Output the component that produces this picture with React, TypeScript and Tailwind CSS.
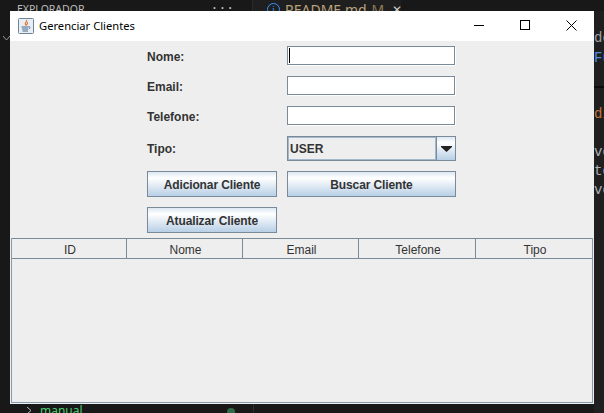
const labelClass = "w-[140px] text-[12px] font-bold text-[#333333]";
const fieldClass = "mb-px h-[19px] w-[168px] border border-[#7a8a99] bg-white shadow-[1px_1px_0_#ffffff]";
const buttonClass =
  "h-[26px] border border-[#7a8a99] bg-gradient-to-b from-[#dde8f3] via-[#ffffff] via-[25%] to-[#b8cfe5] pt-[2px] text-[12px] font-bold tracking-[-0.12px] text-[#333333]";

const columns = ["ID", "Nome", "Email", "Telefone", "Tipo"];

const JavaIcon = () => (
  <svg width="16" height="16" viewBox="0 0 16 16" fill="none">
    <rect x="0.5" y="0.5" width="15" height="15" rx="1" fill="#e8eef5" stroke="#6f8296" />
    <path d="M8.5 2c1 1.7-1.8 2.4-1.1 4.2.2.6.7.9.9 1.3-.1-1.1 2.1-1.8 1.1-3.4" stroke="#e2762c" strokeWidth="1.2" />
    <path d="M3.5 9h7M4 11h6M4.5 13h5.5" stroke="#47698c" strokeWidth="1" />
    <path d="M10.5 8.8c1.9-.4 2.2 1.5.2 2.1" stroke="#47698c" strokeWidth="0.9" />
  </svg>
);

const Background = () => (
  <div className="flex h-full w-full bg-[#181818] text-[#cccccc]">
    <div className="flex h-[40px] w-[253px] shrink-0 justify-between border-r border-[#2b2b2b] pl-[17px] pr-[18px] pt-[2px]">
      <span className="font-['Noto_Sans',sans-serif] text-[10.5px] leading-[14px] text-[#bbbbbb]">EXPLORADOR</span>
      <span className="font-['Liberation_Mono',monospace] text-[13px] leading-[14px]">···</span>
    </div>
    <div className="flex h-[40px] w-[148px] shrink-0 gap-[5px] overflow-hidden bg-[#1f1f1f] pl-[14px] pt-[1px] font-['Noto_Sans',sans-serif] text-[14px] leading-[18px]">
      <span className="mt-[2px] flex h-[13px] w-[13px] shrink-0 items-center justify-center rounded-full border border-[#3794ff] text-[9px] leading-none text-[#3794ff]">i</span>
      <span className="shrink-0 text-[#b9a27c]">README.md</span>
      <span className="shrink-0 text-[#8f7c58]">M</span>
      <span className="ml-[3px] shrink-0 text-[12px] text-[#cccccc]">✕</span>
    </div>
    <div className="flex-1" />
  </div>
);

export default function App() {
  return (
    <div className="relative h-[413px] w-[604px] overflow-hidden font-['Liberation_Sans',Arial,sans-serif]">
      <Background />

      {/* Bits of the editor showing round the window */}
      <svg className="absolute left-[3px] top-[34px]" width="8" height="8" viewBox="0 0 8 8" fill="none">
        <path d="M0 2l3.5 4L7 2" stroke="#999999" strokeWidth="1" />
      </svg>
      <div className="absolute left-[594px] top-[11px] h-[402px] w-[10px] bg-[#1f1f1f]" />
      <div className="absolute left-[594px] top-[28px] font-['Liberation_Mono',monospace] text-[14px] leading-[20px]">
        <div className="text-[#a0a0a0]">de</div>
        <div className="text-[#4d8fe0]">Fu</div>
      </div>
      <div className="absolute left-[594px] top-[86px] h-[2px] w-[10px] bg-[#0c0c0c]" />
      <div className="absolute left-[594px] top-[104px] font-['Liberation_Mono',monospace] text-[14px] leading-[20px] text-[#c2743c]">di</div>
      <div className="absolute left-[594px] top-[143px] font-['Liberation_Mono',monospace] text-[14px] leading-[19px] text-[#b0b0b0]">
        <div>vo</div>
        <div>tê</div>
        <div>vo</div>
      </div>
      <svg className="absolute left-[26px] top-[407px]" width="6" height="6" viewBox="0 0 6 6" fill="none">
        <path d="M1 0l4 3.5L1 7" stroke="#bbbbbb" strokeWidth="1" />
      </svg>
      <div className="absolute left-[40px] top-[405px] font-['Noto_Sans',sans-serif] text-[12px] leading-[12px] text-[#4ec96f]">manual</div>
      <div className="absolute left-[227px] top-[408px] h-2 w-2 rounded-full bg-[#2f6b48]" />
      <div className="absolute left-[253px] top-[404px] h-[9px] w-px bg-[#2b2b2b]" />

      {/* Window */}
      <div className="absolute left-[10px] top-[11px] flex h-[393px] w-[584px] flex-col bg-[#eeeeee]">
        <div className="flex h-[30px] items-center bg-white">
          <div className="mb-px ml-[8px] mr-[5px] flex">
            <JavaIcon />
          </div>
          <span className="font-['Noto_Sans',sans-serif] text-[11.2px] text-black">Gerenciar Clientes</span>
          <div className="ml-auto flex h-full items-center pb-[2px]">
            <div className="flex h-full w-[46px] items-center justify-center">
              <div className="h-px w-[10px] bg-black" />
            </div>
            <div className="flex h-full w-[46px] items-center justify-center">
              <div className="h-[10px] w-[10px] border border-black" />
            </div>
            <div className="flex h-full w-[46px] items-center justify-center">
              <svg width="11" height="11" viewBox="0 0 11 11" fill="none">
                <path d="M0.5 0.5l10 10M10.5 0.5l-10 10" stroke="black" strokeWidth="1" />
              </svg>
            </div>
          </div>
        </div>

        <div className="flex flex-col pl-[137px] pt-[5px]">
          <div className="flex items-center">
            <span className={`${labelClass} pt-[2px]`}>Nome:</span>
            <div className={`${fieldClass} flex items-center pl-px`}>
              <div className="h-[15px] w-px bg-black" />
            </div>
          </div>
          <div className="mt-[10px] flex items-center">
            <span className={`${labelClass} pt-[2px]`}>Email:</span>
            <div className={fieldClass} />
          </div>
          <div className="mt-[10px] flex items-center">
            <span className={`${labelClass} pt-[2px]`}>Telefone:</span>
            <div className={fieldClass} />
          </div>
          <div className="mt-[10px] flex items-center">
            <span className={labelClass}>Tipo:</span>
            <div className="flex h-[25px] w-[169px] border border-[#7a8a99] bg-[#eeeeee]">
              <div className="flex flex-1 items-center border border-[#a3b8cc] pl-px text-[12px] font-bold text-[#333333]">USER</div>
              <div className="flex w-[19px] items-center justify-center border-l border-[#7a8a99] bg-gradient-to-b from-[#dde8f3] via-[#ffffff] via-[25%] to-[#b8cfe5]">
                <svg width="11" height="6" viewBox="0 0 11 6">
                  <path d="M0 0h11v1L5.5 6 0 1z" fill="#222222" />
                </svg>
              </div>
            </div>
          </div>
          <div className="mt-[10px] flex gap-[10px]">
            <button className={`${buttonClass} w-[130px]`}>Adicionar Cliente</button>
            <button className={`${buttonClass} w-[169px]`}>Buscar Cliente</button>
          </div>
          <div className="mt-[10px] flex">
            <button className={`${buttonClass} w-[130px]`}>Atualizar Cliente</button>
          </div>
        </div>

        <div className="mx-px mb-px mt-[5px] flex-1 border-x border-b border-[#8a9aa9] bg-[#eeeeee]">
          <div className="grid h-[21px] grid-cols-[115px_116px_116px_117px_1fr] border-y border-[#7a8a99]">
            {columns.map((col, i) => (
              <div
                key={col}
                className={`flex items-center justify-center pl-[2px] pt-[2px] text-[12px] text-[#333333] ${i < 4 ? "border-r border-[#7a8a99]" : ""}`}
              >
                {col}
              </div>
            ))}
          </div>
        </div>
      </div>
    </div>
  );
}
